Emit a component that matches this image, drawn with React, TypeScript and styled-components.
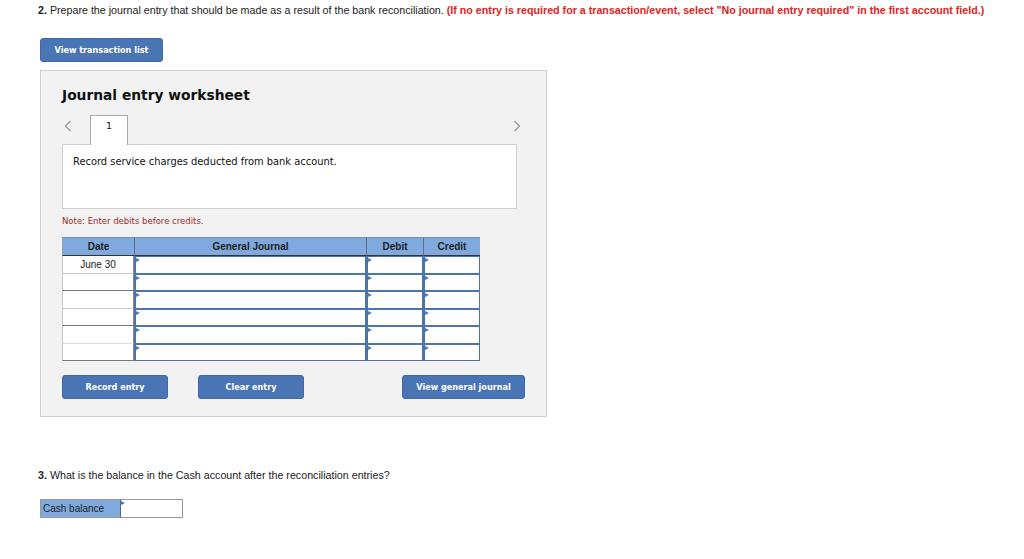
import React from "react";
import styled, { createGlobalStyle } from "styled-components";

const Global = createGlobalStyle`
  html, body { margin: 0; padding: 0; background: #fff; }
  body { font-family: "Liberation Sans", Arial, sans-serif; color: #222; }
`;

const Page = styled.div`
  padding: 4px 0 0 38px;
  width: 1024px;
  height: 559px;
  box-sizing: border-box;
`;

const Question = styled.p`
  margin: 0;
  font-size: 10.7px;
  line-height: 13px;
  color: #222;
  white-space: nowrap;
`;

const Num = styled.b`
  font-weight: bold;
`;

const Red = styled.b`
  color: #e0241b;
  font-weight: bold;
`;

const Btn = styled.button<{ $w: number }>`
  width: ${(p) => p.$w}px;
  flex: none;
  height: 24px;
  box-sizing: border-box;
  background: #4a75b5;
  border: 1px solid #3f69a8;
  border-radius: 3px;
  color: #fff;
  font-family: "DejaVu Sans", Verdana, sans-serif;
  font-weight: bold;
  font-size: 8.1px;
  padding: 0;
  cursor: pointer;
`;

const TopBtnRow = styled.div`
  margin: 21px 0 0 2px;
`;

const Panel = styled.div`
  margin: 8px 0 0 2px;
  width: 507px;
  height: 347px;
  box-sizing: border-box;
  background: #f2f2f2;
  border: 1px solid #cfcfcf;
  padding: 15px 29px 0 21px;
`;

const Title = styled.h2`
  margin: 0;
  font-family: "DejaVu Sans", Verdana, sans-serif;
  font-size: 13.8px;
  line-height: 18px;
  font-weight: bold;
  color: #111;
`;

const TabRow = styled.div`
  margin-top: 10px;
  display: flex;
  align-items: flex-end;
  height: 30px;
`;

const Arrow = styled.span<{ $right?: boolean }>`
  width: 28px;
  height: 24px;
  display: flex;
  align-items: center;
  justify-content: ${(p) => (p.$right ? "flex-end" : "flex-start")};
  padding-left: ${(p) => (p.$right ? "0" : "2px")};
  margin-right: ${(p) => (p.$right ? "-4px" : "0")};
  box-sizing: border-box;
  align-self: flex-start;
`;

const Tab = styled.div`
  width: 38px;
  height: 30px;
  box-sizing: border-box;
  background: #fff;
  border: 1px solid #a8a8a8;
  border-bottom: none;
  display: flex;
  justify-content: center;
  padding-top: 4px;
  font-family: "DejaVu Sans", Verdana, sans-serif;
  font-size: 9.5px;
  line-height: 12px;
  color: #111;
  margin-bottom: -1px;
  position: relative;
  z-index: 1;
`;

const Spacer = styled.div`
  flex: 1;
`;

const Content = styled.div`
  height: 65px;
  box-sizing: border-box;
  background: #fff;
  border: 1px solid #cfcfcf;
  padding: 11px 10px;
  font-family: "DejaVu Sans", Verdana, sans-serif;
  font-size: 9.9px;
  color: #111;
`;

const Note = styled.div`
  margin-top: 7px;
  font-family: "DejaVu Sans", Verdana, sans-serif;
  font-size: 8.5px;
  color: #a52a2a;
  line-height: 10px;
`;

const Table = styled.div`
  margin-top: 11px;
  width: 418px;
  display: grid;
  grid-template-columns: 72px 232px 57px 57px;
  grid-template-rows: 19px repeat(6, 17.5px);
  box-sizing: border-box;
  border-right: 1px solid #555;
`;

const Th = styled.div<{ $first?: boolean }>`
  background: #80a9de;
  border-top: 1px solid #6f8fbf;
  border-bottom: 1px solid #333;
  border-left: 1px solid ${(p) => (p.$first ? "#8aa" : "#5c6f8c")};
  display: flex;
  align-items: center;
  justify-content: center;
  font-size: 10px;
  font-weight: bold;
  color: #222;
  box-sizing: border-box;
`;

const DateCell = styled.div<{ $bottom: string }>`
  background: #fff;
  border-left: 1px solid #c8c8c8;
  border-right: 1px solid #888;
  border-bottom: 1px solid ${(p) => p.$bottom};
  box-sizing: border-box;
  display: flex;
  align-items: center;
  justify-content: center;
  font-size: 10px;
  color: #222;
`;

const InputCell = styled.div`
  position: relative;
  background: #fff;
  border: 1.5px solid #4d73ad;
  border-left-width: 2px;
  box-sizing: border-box;
  &::before {
    content: "";
    position: absolute;
    left: 0;
    top: 1px;
    border-top: 2.5px solid transparent;
    border-bottom: 2.5px solid transparent;
    border-left: 4px solid #3f7ad0;
  }
`;

const BtnRow = styled.div`
  margin-top: 14px;
  display: flex;
`;

const MidBtn = styled(Btn)`
  margin-left: 30px;
`;

const RightBtn = styled(Btn)`
  margin-left: 98px;
`;

const Q3 = styled(Question)`
  margin-top: 52px;
`;

const CashRow = styled.div`
  margin: 17px 0 0 2px;
  display: flex;
  height: 19px;
`;

const CashLabel = styled.div`
  width: 80px;
  box-sizing: border-box;
  background: #80a9de;
  border: 1px solid #999;
  border-right: none;
  font-size: 10px;
  padding-left: 2px;
  display: flex;
  align-items: center;
  color: #222;
`;

const CashInput = styled.div`
  position: relative;
  width: 63px;
  box-sizing: border-box;
  background: #fff;
  border: 1px solid #999;
  border-left: 1px solid #666;
  &::before {
    content: "";
    position: absolute;
    left: 0;
    top: 1px;
    border-top: 2.5px solid transparent;
    border-bottom: 2.5px solid transparent;
    border-left: 4px solid #3f7ad0;
  }
`;

const Chevron = ({ dir }: { dir: "l" | "r" }) => (
  <svg width="8" height="12" viewBox="0 0 8 12">
    <path
      d={dir === "l" ? "M6.5 1 L1.5 6 L6.5 11" : "M1.5 1 L6.5 6 L1.5 11"}
      fill="none"
      stroke="#9a9a9a"
      strokeWidth="1.3"
    />
  </svg>
);

const dateBorders = ["#c8c8c8", "#777", "#c8c8c8", "#777", "#dcdcdc", "#777"];

export default function App() {
  return (
    <Page>
      <Global />
      <Question>
        <Num>2.</Num> Prepare the journal entry that should be made as a result of the bank
        reconciliation.{" "}
        <Red>
          (If no entry is required for a transaction/event, select "No journal entry required" in
          the first account field.)
        </Red>
      </Question>
      <TopBtnRow>
        <Btn $w={123}>View transaction list</Btn>
      </TopBtnRow>
      <Panel>
        <Title>Journal entry worksheet</Title>
        <TabRow>
          <Arrow>
            <Chevron dir="l" />
          </Arrow>
          <Tab>1</Tab>
          <Spacer />
          <Arrow $right>
            <Chevron dir="r" />
          </Arrow>
        </TabRow>
        <Content>Record service charges deducted from bank account.</Content>
        <Note>Note: Enter debits before credits.</Note>
        <Table>
          <Th $first>Date</Th>
          <Th>General Journal</Th>
          <Th>Debit</Th>
          <Th>Credit</Th>
          {dateBorders.map((b, i) => (
            <React.Fragment key={i}>
              <DateCell $bottom={b}>{i === 0 ? "June 30" : ""}</DateCell>
              <InputCell />
              <InputCell />
              <InputCell />
            </React.Fragment>
          ))}
        </Table>
        <BtnRow>
          <Btn $w={106}>Record entry</Btn>
          <MidBtn $w={106}>Clear entry</MidBtn>
          <RightBtn $w={123}>View general journal</RightBtn>
        </BtnRow>
      </Panel>
      <Q3>
        <Num>3.</Num> What is the balance in the Cash account after the reconciliation entries?
      </Q3>
      <CashRow>
        <CashLabel>Cash balance</CashLabel>
        <CashInput />
      </CashRow>
    </Page>
  );
}
